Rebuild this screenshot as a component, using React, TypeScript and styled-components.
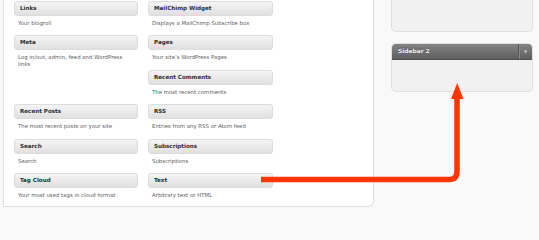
import styled, { createGlobalStyle } from "styled-components"

const GlobalStyle = createGlobalStyle`
    html, body {
        margin: 0;
        padding: 0;
        background: #f9f9f9;
    }
    body {
        font-family: "DejaVu Sans", "Liberation Sans", sans-serif;
    }
`

const Page = styled.div`
    position: relative;
    display: flex;
    width: 539px;
    height: 207px;
    overflow: hidden;
`

const WidgetPanel = styled.div`
    width: 359px;
    height: 205px;
    margin-left: 3px;
    padding: 1px 0 0 10px;
    background: #fff;
    border: 1px solid #dfdfdf;
    border-top: none;
    border-bottom-right-radius: 6px;
`

const WidgetGrid = styled.div`
    display: grid;
    grid-template-columns: 124px 125px;
    grid-auto-rows: 34.4px;
    column-gap: 10px;
`

const Widget = styled.div<{ $col: number; $row: number }>`
    grid-column: ${p => p.$col};
    grid-row: ${p => p.$row};
`

const WidgetHeader = styled.div`
    height: 13px;
    line-height: 13px;
    padding-left: 5px;
    border: 1px solid #dcdcdc;
    border-radius: 3px;
    background: linear-gradient(#f4f4f4, #e0e0e0);
    font-size: 5.6px;
    font-weight: bold;
    color: #2f2f2f;
`

const WidgetDesc = styled.p`
    margin: 4px 0 0;
    padding: 0 10px 0 4px;
    font-size: 5.4px;
    line-height: 7px;
    color: #606060;
`

const SidebarColumn = styled.div`
    display: flex;
    flex-direction: column;
    gap: 11px;
    width: 142px;
    margin-left: 17px;
`

const SidebarBox = styled.div<{ $cut?: boolean }>`
    background: #f1f1f1;
    border: 1px solid #dfdfdf;
    border-top: ${p => (p.$cut ? "none" : "1px solid #dfdfdf")};
    border-radius: ${p => (p.$cut ? "0 0 5px 5px" : "5px")};
    overflow: hidden;
`

const SidebarHeader = styled.div`
    display: flex;
    height: 15px;
    background: linear-gradient(#848484, #5e5e5e);
    border-bottom: 1px solid #4f4f4f;
`

const SidebarTitle = styled.span`
    flex: 1;
    padding-left: 6px;
    line-height: 15px;
    font-size: 5.9px;
    font-weight: bold;
    color: #eee;
    text-shadow: 0 -1px 0 #444;
`

const Toggle = styled.span`
    width: 13px;
    border-left: 1px solid #555;
    box-shadow: inset 1px 0 0 #8a8a8a;
    color: #ccc;
    font-size: 4px;
    line-height: 15px;
    text-align: center;
`

const SidebarBody = styled.div<{ $h: number }>`
    height: ${p => p.$h}px;
`

const Arrow = styled.svg`
    position: absolute;
    left: 0;
    top: 0;
    pointer-events: none;
`

const widgets = [
    { col: 1, row: 1, title: "Links", desc: "Your blogroll" },
    { col: 2, row: 1, title: "MailChimp Widget", desc: "Displays a MailChimp Subscribe box" },
    { col: 1, row: 2, title: "Meta", desc: "Log in/out, admin, feed and WordPress links" },
    { col: 2, row: 2, title: "Pages", desc: "Your site\u2019s WordPress Pages" },
    { col: 2, row: 3, title: "Recent Comments", desc: "The most recent comments" },
    { col: 1, row: 4, title: "Recent Posts", desc: "The most recent posts on your site" },
    { col: 2, row: 4, title: "RSS", desc: "Entries from any RSS or Atom feed" },
    { col: 1, row: 5, title: "Search", desc: "Search" },
    { col: 2, row: 5, title: "Subscriptions", desc: "Subscriptions" },
    { col: 1, row: 6, title: "Tag Cloud", desc: "Your most used tags in cloud format" },
    { col: 2, row: 6, title: "Text", desc: "Arbitrary text or HTML" },
]

export default function App() {
    return (
        <>
            <GlobalStyle />
            <Page>
                <WidgetPanel>
                    <WidgetGrid>
                        {widgets.map(w => (
                            <Widget key={w.title} $col={w.col} $row={w.row}>
                                <WidgetHeader>{w.title}</WidgetHeader>
                                <WidgetDesc>{w.desc}</WidgetDesc>
                            </Widget>
                        ))}
                    </WidgetGrid>
                </WidgetPanel>

                <SidebarColumn>
                    <SidebarBox $cut>
                        <SidebarBody $h={31} />
                    </SidebarBox>
                    <SidebarBox>
                        <SidebarHeader>
                            <SidebarTitle>Sidebar 2</SidebarTitle>
                            <Toggle>▼</Toggle>
                        </SidebarHeader>
                        <SidebarBody $h={31} />
                    </SidebarBox>
                </SidebarColumn>

                <Arrow width="539" height="207" viewBox="0 0 539 207">
                    <path
                        d="M261 179.5 H449 Q457 179.5 457 171.5 V97"
                        fill="none"
                        stroke="#ff3600"
                        strokeWidth="5.5"
                    />
                    <polygon points="451,99 463.5,99 457.2,83" fill="#ff3600" />
                </Arrow>
            </Page>
        </>
    )
}
